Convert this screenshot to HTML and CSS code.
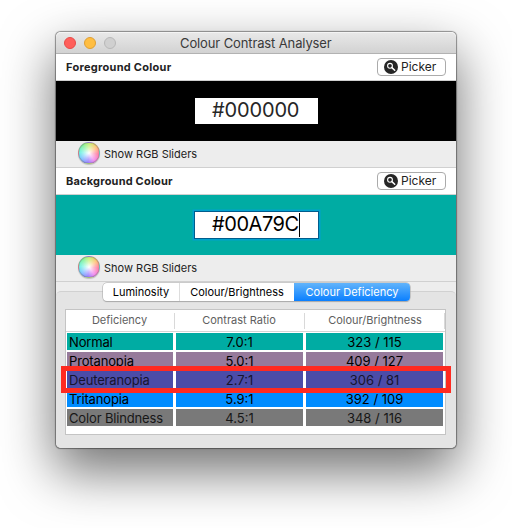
FILE: index.html
```html
<!DOCTYPE html>
<html lang="en">
<head>
<meta charset="utf-8">
<title>Colour Contrast Analyser</title>
<link rel="stylesheet" href="styles.css">
</head>
<body>
<svg class="defs" width="0" height="0" aria-hidden="true">
  <symbol id="magnifier" viewBox="0 0 14 14">
    <circle cx="7" cy="7" r="7" fill="#262626"/>
    <circle cx="6" cy="5.8" r="2.4" fill="none" stroke="#fff" stroke-width="1.1"/>
    <path d="M7.9 7.6 L10.7 10.3" stroke="#fff" stroke-width="1.5" stroke-linecap="round"/>
  </symbol>
</svg>
<main class="window">
  <header class="titlebar">
    <div class="lights"><i class="light red"></i><i class="light yellow"></i><i class="light off"></i></div>
    <h1 class="title">Colour Contrast Analyser</h1>
  </header>

  <section class="bar">
    <h2 class="label label-fg">Foreground Colour</h2>
    <button class="picker"><svg class="picker-icon"><use href="#magnifier"/></svg><span>Picker</span></button>
  </section>
  <section class="swatch swatch-fg"><div class="hex"><span>#000000</span></div></section>
  <section class="sliders"><i class="wheel"></i><span>Show RGB Sliders</span></section>

  <section class="bar">
    <h2 class="label label-bg">Background Colour</h2>
    <button class="picker"><svg class="picker-icon"><use href="#magnifier"/></svg><span>Picker</span></button>
  </section>
  <section class="swatch swatch-bg"><div class="hex focused"><span>#00A79C</span><i class="caret"></i></div></section>
  <section class="sliders"><i class="wheel"></i><span>Show RGB Sliders</span></section>

  <section class="results">
    <nav class="tabs">
      <span class="tab tab-lum">Luminosity</span>
      <span class="tab tab-bright">Colour/Brightness</span>
      <span class="tab active">Colour Deficiency</span>
    </nav>
    <div class="pane">
      <div class="table">
        <div class="row head"><span>Deficiency</span><span>Contrast Ratio</span><span>Colour/Brightness</span></div>
        <div class="rows">
          <div class="row normal"><span>Normal</span><span>7.0:1</span><span>323 / 115</span></div>
          <div class="row protanopia"><span>Protanopia</span><span>5.0:1</span><span>409 / 127</span></div>
          <div class="row deuteranopia"><span>Deuteranopia</span><span>2.7:1</span><span>306 / 81</span></div>
          <div class="row tritanopia"><span>Tritanopia</span><span>5.9:1</span><span>392 / 109</span></div>
          <div class="row blindness"><span>Color Blindness</span><span>4.5:1</span><span>348 / 116</span></div>
        </div>
        <div class="highlight"></div>
      </div>
    </div>
  </section>
</main>
</body>
</html>
```
FILE: styles.css
```css
* { box-sizing: border-box; }
body {
  margin: 0;
  width: 512px;
  height: 528px;
  padding: 32px 56px;
  overflow: hidden;
  background: #fff;
  color: #222;
  font-family: Inter, "Liberation Sans", sans-serif;
  font-size: 12px;
}
.defs { position: absolute; }
.window {
  width: 400px;
  height: 416px;
  border-radius: 5px;
  background: #ededed;
  box-shadow: 0 0 1px 0.5px rgba(0,0,0,.4), 0 22px 52px 2px rgba(0,0,0,.55);
}
.titlebar {
  display: flex;
  align-items: center;
  height: 22px;
  padding-left: 8px;
  border-bottom: 1px solid #b2b2b2;
  border-radius: 5px 5px 0 0;
  background: linear-gradient(#e9e9e9, #d2d2d2);
  box-shadow: inset 0 1px #f4f4f4;
}
.lights { display: flex; gap: 8px; width: 116px; }
.light { width: 12px; height: 12px; border: 1px solid; border-radius: 50%; }
.red { background: #ff5f5b; border-color: #e84b48; }
.yellow { background: #ffbe42; border-color: #df9f34; }
.off { background: #d0d0d0; border-color: #b8b8b8; }
.title { margin: 1px 0 0; color: #3a3a3a; font-size: 13px; font-weight: 400; letter-spacing: -.12px; white-space: nowrap; }
.bar {
  display: flex;
  align-items: center;
  justify-content: space-between;
  height: 27px;
  padding: 0 10px;
  border-bottom: 1px solid #d0d0d0;
  background: #fff;
}
.label { margin: 0; font-size: 11px; font-weight: 700; }
.label-fg { letter-spacing: .28px; }
.label-bg { letter-spacing: .2px; }
.picker {
  display: flex;
  align-items: center;
  gap: 3px;
  width: 69px;
  height: 18px;
  margin: 0;
  padding: 0 0 0 6px;
  border: 1px solid #ababab;
  border-radius: 4px;
  background: #fff;
  color: #222;
  font: 12px Inter, "Liberation Sans", sans-serif;
}
.picker span { margin-top: -1px; }
.picker-icon { width: 14px; height: 14px; flex: none; }
.swatch { display: flex; align-items: center; height: 60px; padding-left: 139px; }
.swatch-fg { background: #000; }
.swatch-bg { background: #00aca3; }
.hex {
  display: flex;
  align-items: center;
  width: 123px;
  height: 26px;
  padding-left: 17px;
  background: #fff;
  color: #262626;
  font-size: 20px;
  letter-spacing: -.15px;
  line-height: 25px;
}
.hex span { margin-top: -1px; }
.focused { color: #000; letter-spacing: -.45px; box-shadow: 0 0 0 1px #005d8c, 0 0 0 2.5px #00a1cd; }
.caret { width: 1px; height: 24px; background: #000; }
.sliders {
  display: flex;
  align-items: center;
  gap: 4px;
  height: 27px;
  padding-left: 22px;
  border-bottom: 1px solid #d0d0d0;
  font-size: 11px;
}
.wheel {
  width: 22px;
  height: 22px;
  margin-top: -2px;
  border: 1px solid rgba(120,120,120,.45);
  border-radius: 50%;
  background: radial-gradient(circle, #fff 0, rgba(255,255,255,.55) 35%, rgba(255,255,255,.1) 75%),
    conic-gradient(#b6ee55, #ffb655 50deg, #ff608d 95deg, #f071ea 145deg, #8461ff 185deg, #62baff 235deg, #4ff0dc 275deg, #68ef87 320deg, #b6ee55);
  box-shadow: 0 1px 1px rgba(0,0,0,.2);
}
.results { height: 167px; padding-top: 1px; border-radius: 0 0 5px 5px; }
.tabs {
  position: relative;
  display: flex;
  width: 307px;
  height: 18px;
  margin-left: 47px;
  border-radius: 4px;
  background: #fff;
  box-shadow: 0 0 0 .5px #aaa, 0 1px 1px rgba(0,0,0,.25);
  color: #000;
  font-size: 11px;
  line-height: 18px;
  text-align: center;
  white-space: nowrap;
}
.tab-lum { width: 77px; border-right: 1px solid #ddd; }
.tab-bright { width: 114px; }
.active { width: 116px; border-radius: 0 4px 4px 0; background: linear-gradient(#62b4fb, #0a7fff); color: #fff; }
.pane {
  height: 157px;
  margin-top: -10px;
  padding: 17px 9px 0;
  border-top: 1px solid #d1d1d1;
  border-radius: 5px;
  background: #e4e4e4;
}
.table { position: relative; width: 381px; height: 126px; border: 1px solid #c4c4c4; background: #fff; }
.row { display: grid; grid-template-columns: 106px 127px 137px; column-gap: 3px; padding-left: 1px; }
.head {
  height: 22px;
  border-bottom: 1px solid #d5d5d5;
  color: #606060;
  font-size: 11px;
  line-height: 21px;
  text-align: center;
}
.head span { height: 16px; margin: 3px -2px 0 0; padding-right: 2px; border-right: 1px solid #d9d9d9; line-height: 15px; }
.head span:last-child { padding-right: 0; }
.rows { display: grid; row-gap: 2px; padding-top: 1px; color: #000; font-size: 13px; }
.rows span { height: 17px; overflow: hidden; line-height: 19px; text-align: center; white-space: nowrap; }
.rows span:first-child { padding-left: 2px; letter-spacing: -.15px; text-align: left; }
.normal span { background: #00aca3; }
.protanopia span { background: #967a9b; }
.deuteranopia span { background: #4b4ca8; color: #15152d; }
.tritanopia span { background: #008cff; }
.blindness span { background: #797979; color: #171717; }
.highlight { position: absolute; left: -5px; top: 56px; width: 390px; height: 27px; border: 5px solid #ff2a20; }
```
